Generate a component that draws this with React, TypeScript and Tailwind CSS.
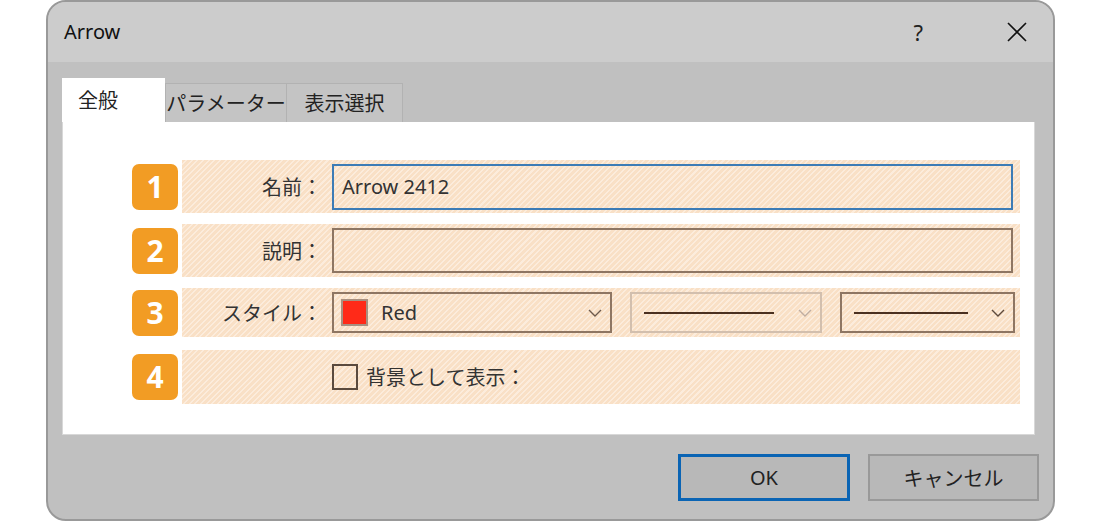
const jp = "font-['Noto_Sans_CJK_JP','Noto_Sans',sans-serif]";

const hatch =
  "bg-[repeating-linear-gradient(135deg,#f9e0c6_0px,#f9e0c6_2.5px,#fcecdc_2.5px,#fcecdc_4px)]";

function Badge({ n }: { n: number }) {
  return (
    <div className="w-[46px] h-[46px] shrink-0 rounded-[7px] bg-[#f29c24] flex items-center justify-center text-white text-[30px] font-bold font-['Noto_Sans',sans-serif] leading-none">
      {n}
    </div>
  );
}

function Chevron({ color }: { color: string }) {
  return (
    <svg width="14" height="8" viewBox="0 0 14 8" fill="none">
      <polyline points="1,1 7,7 13,1" stroke={color} strokeWidth="1.4" />
    </svg>
  );
}

function Label({ text }: { text: string }) {
  return (
    <div className="w-[150px] shrink-0 text-right pr-[10px] text-[20px] text-[#333] leading-none">
      {text}
    </div>
  );
}

export default function App() {
  return (
    <div className={`w-[1100px] h-[522px] bg-white ${jp}`}>
      <div className="ml-[46px] w-[1009px] h-[521px] rounded-[20px] border-2 border-[#999999] bg-[#c0c0c0] overflow-hidden flex flex-col">
        {/* Title bar */}
        <div className="h-[60px] shrink-0 bg-[#cccccc] flex items-center pl-[16px] pr-[26px]">
          <span className="text-[20px] text-[#111] font-['Noto_Sans',sans-serif]">Arrow</span>
          <span className="ml-auto mr-[84px] text-[22px] text-[#222] font-['Noto_Sans',sans-serif]">?</span>
          <svg width="20" height="20" viewBox="0 0 20 20">
            <path d="M1 1 L19 19 M19 1 L1 19" stroke="#111" strokeWidth="1.6" />
          </svg>
        </div>

        {/* Body */}
        <div className="flex-1 px-[14px] pt-[16px] flex flex-col">
          <div className="h-[44px] flex items-end text-[20px] text-[#222]">
            <div className="w-[103px] h-[44px] bg-white pl-[16px] flex items-center">全般</div>
            <div className="w-[122px] h-[39px] bg-[#c4c4c4] border border-b-0 border-[#b2b2b2] flex items-center justify-center">
              パラメーター
            </div>
            <div className="w-[116px] h-[39px] bg-[#c4c4c4] border border-b-0 border-l-0 border-[#b2b2b2] flex items-center justify-center">
              表示選択
            </div>
          </div>

          <div className="w-[973px] h-[313px] bg-white border border-t-0 border-[#d8d8d8] pl-[69px] pt-[38px] flex flex-col">
            {/* Row 1 */}
            <div className="flex items-center gap-[4px] h-[53px]">
              <Badge n={1} />
              <div className={`w-[838px] h-[53px] ${hatch} flex items-center`}>
                <Label text="名前：" />
                <div className="w-[681px] h-[46px] border-2 border-[#3d7cb6] flex items-center pl-[8px] text-[20px] text-[#333] font-['Noto_Sans',sans-serif]">
                  Arrow 2412
                </div>
              </div>
            </div>

            {/* Row 2 */}
            <div className="flex items-center gap-[4px] h-[53px] mt-[11px]">
              <Badge n={2} />
              <div className={`w-[838px] h-[53px] ${hatch} flex items-center`}>
                <Label text="説明：" />
                <div className="w-[681px] h-[45px] border-2 border-[#8e7663]" />
              </div>
            </div>

            {/* Row 3 */}
            <div className="flex items-center gap-[4px] h-[49px] mt-[11px]">
              <Badge n={3} />
              <div className={`w-[838px] h-[49px] ${hatch} flex items-center`}>
                <Label text="スタイル：" />
                <div className="w-[280px] h-[41px] border-2 border-[#8e7663] flex items-center pl-[7px] pr-[8px]">
                  <div className="w-[27px] h-[27px] bg-[#ff2a18] border-2 border-[#a89080]" />
                  <span className="ml-[13px] text-[20px] text-[#333] font-['Noto_Sans',sans-serif]">Red</span>
                  <div className="ml-auto">
                    <Chevron color="#6e5a4c" />
                  </div>
                </div>
                <div className="ml-[18px] w-[192px] h-[41px] border-2 border-[#d2bfae] flex items-center pl-[12px] pr-[8px]">
                  <div className="w-[130px] h-[2px] bg-[#4a3020]" />
                  <div className="ml-auto">
                    <Chevron color="#c0ada0" />
                  </div>
                </div>
                <div className="ml-[18px] w-[175px] h-[41px] border-2 border-[#8e7663] flex items-center pl-[12px] pr-[8px]">
                  <div className="w-[114px] h-[2px] bg-[#4a3020]" />
                  <div className="ml-auto">
                    <Chevron color="#5e4a3c" />
                  </div>
                </div>
              </div>
            </div>

            {/* Row 4 */}
            <div className="flex items-center gap-[4px] h-[54px] mt-[13px]">
              <Badge n={4} />
              <div className={`w-[838px] h-[54px] ${hatch} flex items-center pl-[150px]`}>
                <div className="w-[26px] h-[26px] border-2 border-[#5a4a3e] bg-transparent" />
                <span className="ml-[8px] text-[20px] text-[#333]">背景として表示：</span>
              </div>
            </div>
          </div>

          {/* Buttons */}
          <div className="flex justify-end gap-[18px] mt-[19px]">
            <button className="w-[172px] h-[47px] border-[3px] border-[#0a64b4] bg-[#b8b8b8] text-[20px] text-[#222] font-['Noto_Sans',sans-serif]">
              OK
            </button>
            <button className="w-[171px] h-[47px] border-2 border-[#999999] bg-[#b8b8b8] text-[20px] text-[#222]">
              キャンセル
            </button>
          </div>
        </div>
      </div>
    </div>
  );
}
